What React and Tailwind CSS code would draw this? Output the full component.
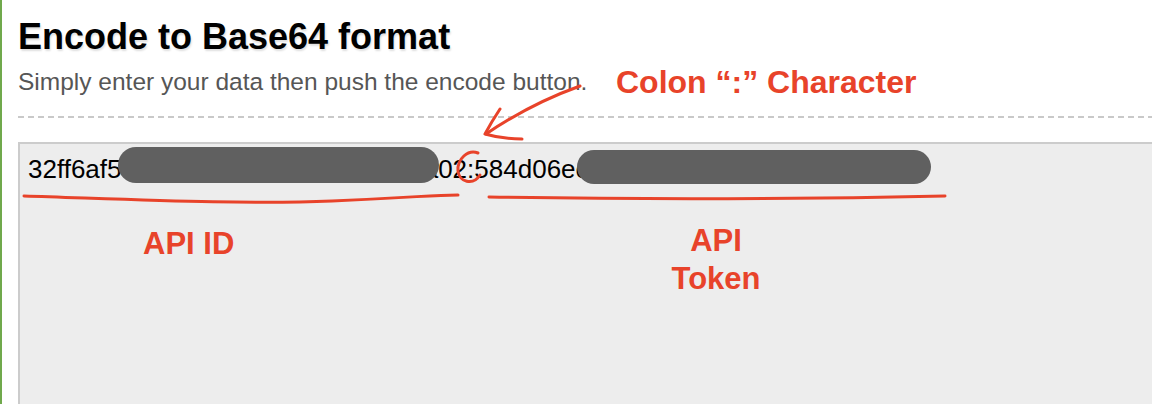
export default function App() {
  const apiId = "32ff6af5" + "9b41e07d3a58c26e1b7d4a" + "02";
  const apiToken = "584d06ec" + "e7a1b9d3c5082e4a6a9b1d3";
  return (
    <div className="relative w-[1152px] h-[404px] overflow-hidden bg-white border-l-2 border-[#70a94c] font-['Liberation_Sans',Arial,sans-serif]">
      <div className="pl-[16px] pt-[17px]">
        <h1 className="text-[36px] leading-[40px] font-bold text-black [text-shadow:1px_2px_2px_rgba(0,0,0,0.13)]">
          Encode to Base64 format
        </h1>
        <p className="mt-[11px] text-[24.5px] leading-[28px] text-[#565656]">
          Simply enter your data then push the encode button.
        </p>
        <div className="mt-[20px] h-[2px] bg-[repeating-linear-gradient(to_right,#c9c9c9_0px,#c9c9c9_6px,transparent_6px,transparent_10px)]" />
        <div className="mt-[24px] h-[300px] border-t-2 border-l-2 border-[#cccccc] bg-[#ededed] pl-[8px] pt-[10px] overflow-hidden">
          <div className="relative text-[26px] leading-[30px] text-black whitespace-nowrap">
            {apiId}:{apiToken}
            {/* redaction pills over the text */}
            <span className="absolute left-[90px] top-[-7px] w-[321px] h-[36px] rounded-full bg-[#606060]" />
            <span className="absolute left-[549px] top-[-4px] w-[354px] h-[34px] rounded-full bg-[#606060]" />
          </div>
        </div>
      </div>

      {/* annotations */}
      <div className="absolute left-[614px] top-[64px] text-[32px] leading-[36px] font-bold text-[#e8432a] whitespace-nowrap">
        Colon “:” Character
      </div>
      <div className="absolute left-[141px] top-[226px] text-[31px] leading-[36px] font-bold text-[#e8432a] whitespace-nowrap">
        API ID
      </div>
      <div className="absolute left-[664px] top-[222px] w-[100px] text-center text-[31px] leading-[38px] font-bold text-[#e8432a]">
        API
        <br />
        Token
      </div>

      <svg
        className="absolute left-0 top-0 pointer-events-none"
        width="1152"
        height="404"
        viewBox="0 0 1152 404"
        fill="none"
        stroke="#e8432a"
        strokeWidth="3"
        strokeLinecap="round"
        strokeLinejoin="round"
      >
        <path d="M22 196 C 120 199, 240 205, 330 201 S 430 195, 456 195" />
        <path d="M487 197 Q 715 201 943 196" />
        <path d="M578 86 Q 528 104 484 134" />
        <path d="M498 109 Q 490 121 483 134 Q 500 139 520 139" />
        <path d="M476 153 C 466 149, 455 159, 456 171 C 457 182, 471 186, 478 175" />
      </svg>
    </div>
  );
}
